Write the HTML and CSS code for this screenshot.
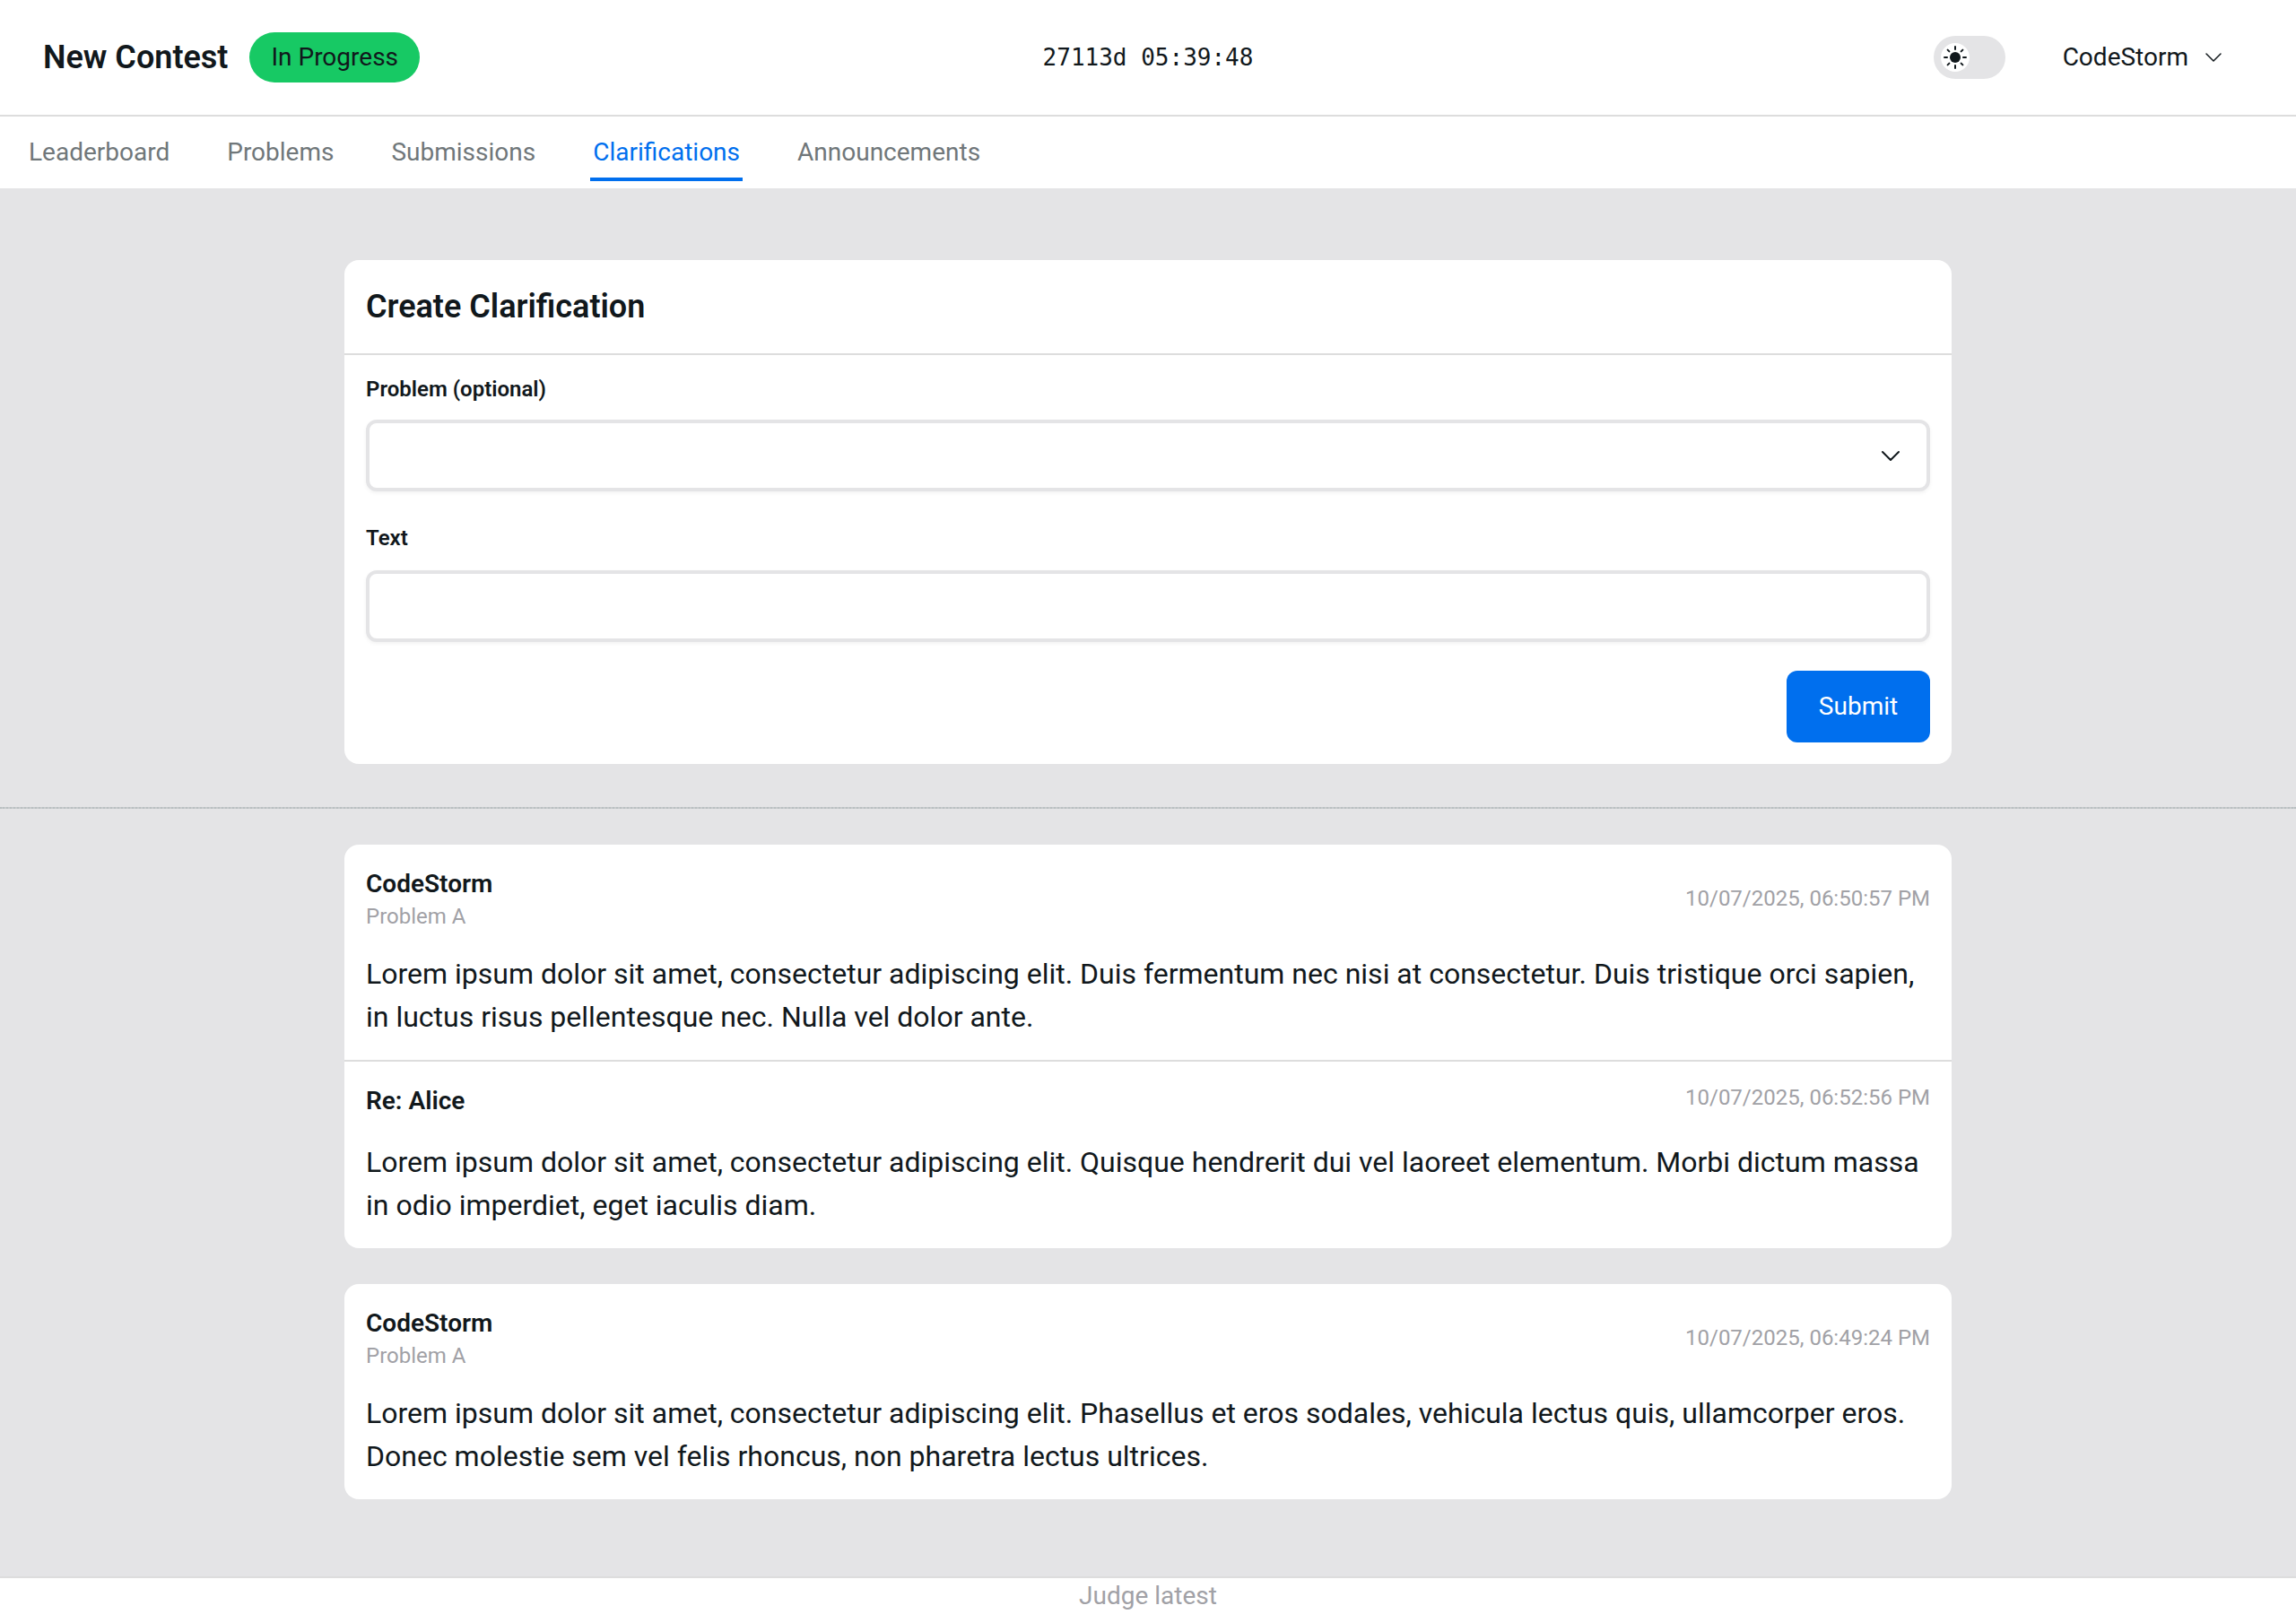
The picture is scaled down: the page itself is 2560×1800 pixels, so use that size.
FILE: index.html
```html
<!DOCTYPE html>
<html lang="en">
<head>
<meta charset="utf-8">
<meta name="viewport" content="width=device-width, initial-scale=1">
<title>New Contest - Clarifications</title>
<link rel="stylesheet" href="styles.css">
</head>
<body>
<header class="topbar">
  <div class="topbar-left">
    <h1 class="contest-title">New Contest</h1>
    <span class="badge">In Progress</span>
  </div>
  <div class="timer">27113d 05:39:48</div>
  <div class="topbar-right">
    <label class="theme-switch">
      <input class="theme-input" type="checkbox" role="switch" aria-label="Dark mode">
      <span class="theme-thumb">
        <svg class="sun" viewBox="0 0 28 28" aria-hidden="true">
          <circle cx="14" cy="14" r="6"/>
          <path d="M14 2v3M14 23v3M2 14h3M23 14h3M5.6 5.6l1.8 1.8M20.6 20.6l1.8 1.8M5.6 22.4l1.8-1.8M20.6 7.4l1.8-1.8"/>
        </svg>
      </span>
    </label>
    <button class="user-menu" type="button">CodeStorm
      <svg class="chevron chevron-thin" viewBox="0 0 24 24" aria-hidden="true"><path d="M4 8l8 8 8-8"/></svg>
    </button>
  </div>
</header>
<nav class="tabs">
  <a class="tab" href="#leaderboard">Leaderboard</a>
  <a class="tab" href="#problems">Problems</a>
  <a class="tab" href="#submissions">Submissions</a>
  <a class="tab tab-active" href="#clarifications" aria-current="page">Clarifications</a>
  <a class="tab" href="#announcements">Announcements</a>
</nav>
<main class="content">
  <form class="card">
    <h2 class="card-title">Create Clarification</h2>
    <div class="form-body">
      <div class="field">
        <label class="label" for="problem">Problem (optional)</label>
        <div class="select-box">
          <select class="control select" id="problem"><option value=""></option><option>Problem A</option></select>
          <svg class="chevron select-chevron" viewBox="0 0 24 24" aria-hidden="true"><path d="M3 8l9 9 9-9"/></svg>
        </div>
      </div>
      <div class="field">
        <label class="label" for="text">Text</label>
        <input class="control text-input" id="text" type="text">
      </div>
      <button class="submit" type="submit">Submit</button>
    </div>
  </form>
  <hr class="divider">
  <section class="thread-list">
    <article class="card">
      <div class="message">
        <div class="message-head">
          <div>
            <h3 class="author">CodeStorm</h3>
            <p class="meta">Problem A</p>
          </div>
          <time class="meta">10/07/2025, 06:50:57 PM</time>
        </div>
        <p class="message-text">Lorem ipsum dolor sit amet, consectetur adipiscing elit. Duis fermentum nec nisi at consectetur. Duis tristique orci sapien, in luctus risus pellentesque nec. Nulla vel dolor ante.</p>
      </div>
      <div class="message reply">
        <div class="message-head">
          <h3 class="author">Re: Alice</h3>
          <time class="meta">10/07/2025, 06:52:56 PM</time>
        </div>
        <p class="message-text">Lorem ipsum dolor sit amet, consectetur adipiscing elit. Quisque hendrerit dui vel laoreet elementum. Morbi dictum massa in odio imperdiet, eget iaculis diam.</p>
      </div>
    </article>
    <article class="card">
      <div class="message">
        <div class="message-head">
          <div>
            <h3 class="author">CodeStorm</h3>
            <p class="meta">Problem A</p>
          </div>
          <time class="meta">10/07/2025, 06:49:24 PM</time>
        </div>
        <p class="message-text">Lorem ipsum dolor sit amet, consectetur adipiscing elit. Phasellus et eros sodales, vehicula lectus quis, ullamcorper eros. Donec molestie sem vel felis rhoncus, non pharetra lectus ultrices.</p>
      </div>
    </article>
  </section>
</main>
<footer class="footer">Judge latest</footer>
</body>
</html>
```
FILE: styles.css
```css
:root {
  --ink: #11181c;
  --line: #dddddd;
  --surface: #e4e4e6;
  --muted: #a1a1a6;
  --primary: #006fee;
}

* { box-sizing: border-box; margin: 0; padding: 0; }

body {
  display: flex;
  flex-direction: column;
  min-height: 100vh;
  background: #fff;
  color: var(--ink);
  font: 28px/40px Roboto, sans-serif;
}

button, input, select { font: inherit; color: inherit; }

/* Top bar */
.topbar {
  display: grid;
  grid-template-columns: 1fr auto 1fr;
  align-items: center;
  padding: 24px 48px;
  border-bottom: 2px solid var(--line);
}
.topbar-left { display: flex; align-items: center; gap: 24px; }
.contest-title { font-size: 36px; line-height: 56px; font-weight: 600; }
.badge { padding: 8px 24px; border-radius: 28px; background: #17c964; }
.timer { font: 26px/40px "DejaVu Sans Mono", monospace; }
.topbar-right { display: flex; justify-content: flex-end; align-items: center; gap: 32px; }

.theme-switch {
  display: flex;
  align-items: center;
  width: 80px;
  height: 48px;
  padding: 0 8px;
  border-radius: 24px;
  background: var(--surface);
  cursor: pointer;
}
.theme-input { appearance: none; width: 0; height: 0; }
.theme-thumb {
  display: flex;
  align-items: center;
  justify-content: center;
  width: 32px;
  height: 32px;
  border-radius: 50%;
  background: #fff;
}
.theme-input:checked + .theme-thumb { margin-left: auto; }
.sun { width: 28px; height: 28px; fill: var(--ink); stroke: var(--ink); stroke-width: 2; stroke-linecap: round; }
.sun circle { stroke: none; }

.user-menu {
  display: flex;
  align-items: center;
  gap: 16px;
  height: 80px;
  padding: 0 32px;
  border: 0;
  background: none;
  cursor: pointer;
}
.chevron { width: 24px; height: 24px; fill: none; stroke: currentColor; stroke-width: 2; stroke-linecap: round; stroke-linejoin: round; }
.chevron-thin { stroke-width: 1.5; }

/* Tabs */
.tabs { display: flex; gap: 16px; padding: 8px; }
.tab {
  display: flex;
  flex-direction: column;
  align-items: center;
  height: 64px;
  padding: 12px 24px;
  line-height: 40px;
  color: #70777a;
  text-decoration: none;
}
.tab-active { position: relative; color: var(--primary); }
.tab-active::after {
  content: "";
  position: absolute;
  bottom: 0;
  width: 80%;
  height: 4px;
  background: var(--primary);
}

/* Content */
.content { flex: 1; padding: 80px 0; background: var(--surface); }
.card { width: 70%; margin: 0 auto; border-radius: 16px; background: #fff; }
.card-title {
  padding: 24px;
  border-bottom: 2px solid var(--line);
  font-size: 36px;
  line-height: 56px;
  font-weight: 600;
}
.form-body { display: flex; flex-direction: column; gap: 38px; padding: 24px; }
.field { display: flex; flex-direction: column; }
.label { font-size: 24px; line-height: 28px; font-weight: 600; }
.control {
  width: 100%;
  height: 80px;
  padding: 0 24px;
  border: 4px solid var(--surface);
  border-radius: 12px;
  background: #fff;
  box-shadow: 0 2px 4px rgba(0, 0, 0, 0.05);
}
.select-box { display: grid; align-items: center; margin-top: 20px; }
.select-box > * { grid-area: 1 / 1; }
.select { appearance: none; }
.select-chevron { justify-self: end; margin-right: 32px; pointer-events: none; }
.text-input { margin-top: 22px; }
.submit {
  align-self: flex-end;
  width: 160px;
  height: 80px;
  margin-top: -6px;
  border: 0;
  border-radius: 12px;
  background: var(--primary);
  color: #fff;
  cursor: pointer;
}
.divider { margin: 48px 0 40px; border: 0; border-top: 2px dotted #b9bfc1; background: #c8cbcd; }

/* Clarification threads */
.thread-list { display: flex; flex-direction: column; gap: 40px; }
.message { display: flex; flex-direction: column; gap: 24px; padding: 24px; }
.message-head { display: flex; justify-content: space-between; align-items: center; }
.reply { border-top: 2px solid var(--line); }
.reply .message-head { align-items: flex-start; }
.author { font-size: 28px; line-height: 40px; font-weight: 600; }
.meta { font-size: 24px; line-height: 32px; color: var(--muted); }
.message-text { font-size: 32px; line-height: 48px; }

.footer { border-top: 2px solid var(--line); color: var(--muted); text-align: center; }
```
